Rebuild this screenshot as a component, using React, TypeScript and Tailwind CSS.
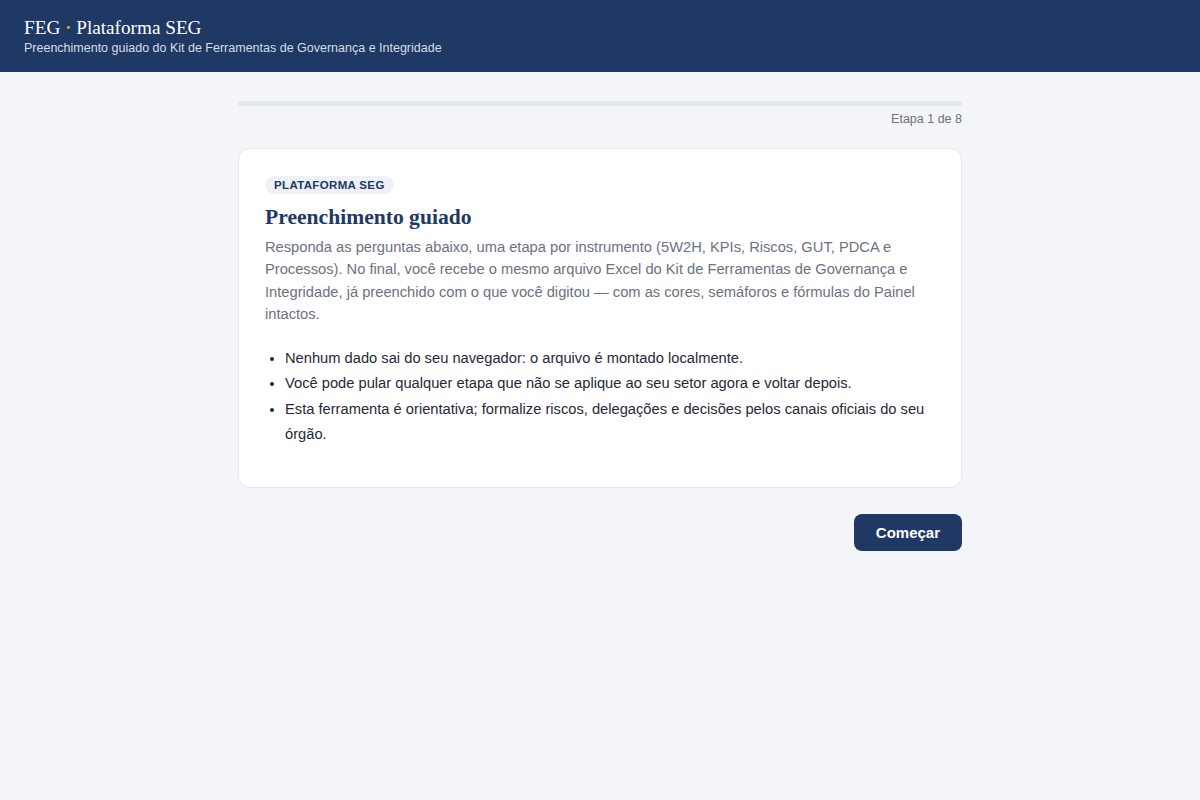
export default function App() {
  const notes = [
    'Nenhum dado sai do seu navegador: o arquivo é montado localmente.',
    'Você pode pular qualquer etapa que não se aplique ao seu setor agora e voltar depois.',
    'Esta ferramenta é orientativa; formalize riscos, delegações e decisões pelos canais oficiais do seu órgão.',
  ];

  return (
    <div className="min-h-screen bg-[#f4f5f9] font-['Liberation_Sans',Arial,sans-serif]">
      <header className="bg-[#203864] px-6 pt-[16px] pb-[16px]">
        <h1 className="font-['Liberation_Serif','Times_New_Roman',serif] text-[19.2px] leading-[24px] text-white">
          FEG <span className="text-[#d4a72c] font-bold">·</span> Plataforma SEG
        </h1>
        <p className="mt-[1px] text-[12.5px] leading-[15px] text-[#d5ddea]">
          Preenchimento guiado do Kit de Ferramentas de Governança e Integridade
        </p>
      </header>

      <main className="mx-auto w-[724px] pt-[29px]">
        <div className="h-[5px] w-full rounded-full bg-[#e2e8f0]" />
        <p className="mt-[4px] text-right text-[12.5px] leading-[18px] text-[#6b7280]">Etapa 1 de 8</p>

        <section className="mt-[20px] rounded-xl border border-[#e2e8f0] bg-white px-[26px] pt-[23px] pb-[28px]">
          <span className="inline-block rounded-full bg-[#eef1f6] px-[9px] py-[2px] text-[11.5px] font-bold leading-[14px] tracking-[0.03em] text-[#203864]">
            PLATAFORMA SEG
          </span>
          <h2 className="mt-[8px] font-['Liberation_Serif','Times_New_Roman',serif] text-[21.6px] font-bold leading-[26px] text-[#203864]">
            Preenchimento guiado
          </h2>
          <p className="mt-[6px] text-[14.7px] leading-[22.3px] text-[#6b7280]">
            Responda as perguntas abaixo, uma etapa por instrumento (5W2H, KPIs, Riscos, GUT, PDCA e Processos). No final, você recebe o mesmo arquivo Excel do Kit de Ferramentas de Governança e Integridade, já preenchido com o que você digitou — com as cores, semáforos e fórmulas do Painel intactos.
          </p>
          <ul className="mt-[21px] mb-[12px] list-disc pl-[20px] text-[14.7px] leading-[25.3px] text-[#1f2937]">
            {notes.map((n) => (
              <li key={n}>{n}</li>
            ))}
          </ul>
        </section>

        <div className="mt-[26px] flex justify-end">
          <button className="h-[37px] rounded-lg bg-[#203864] px-[22px] text-[15px] font-bold text-white">
            Começar
          </button>
        </div>
      </main>
    </div>
  );
}
